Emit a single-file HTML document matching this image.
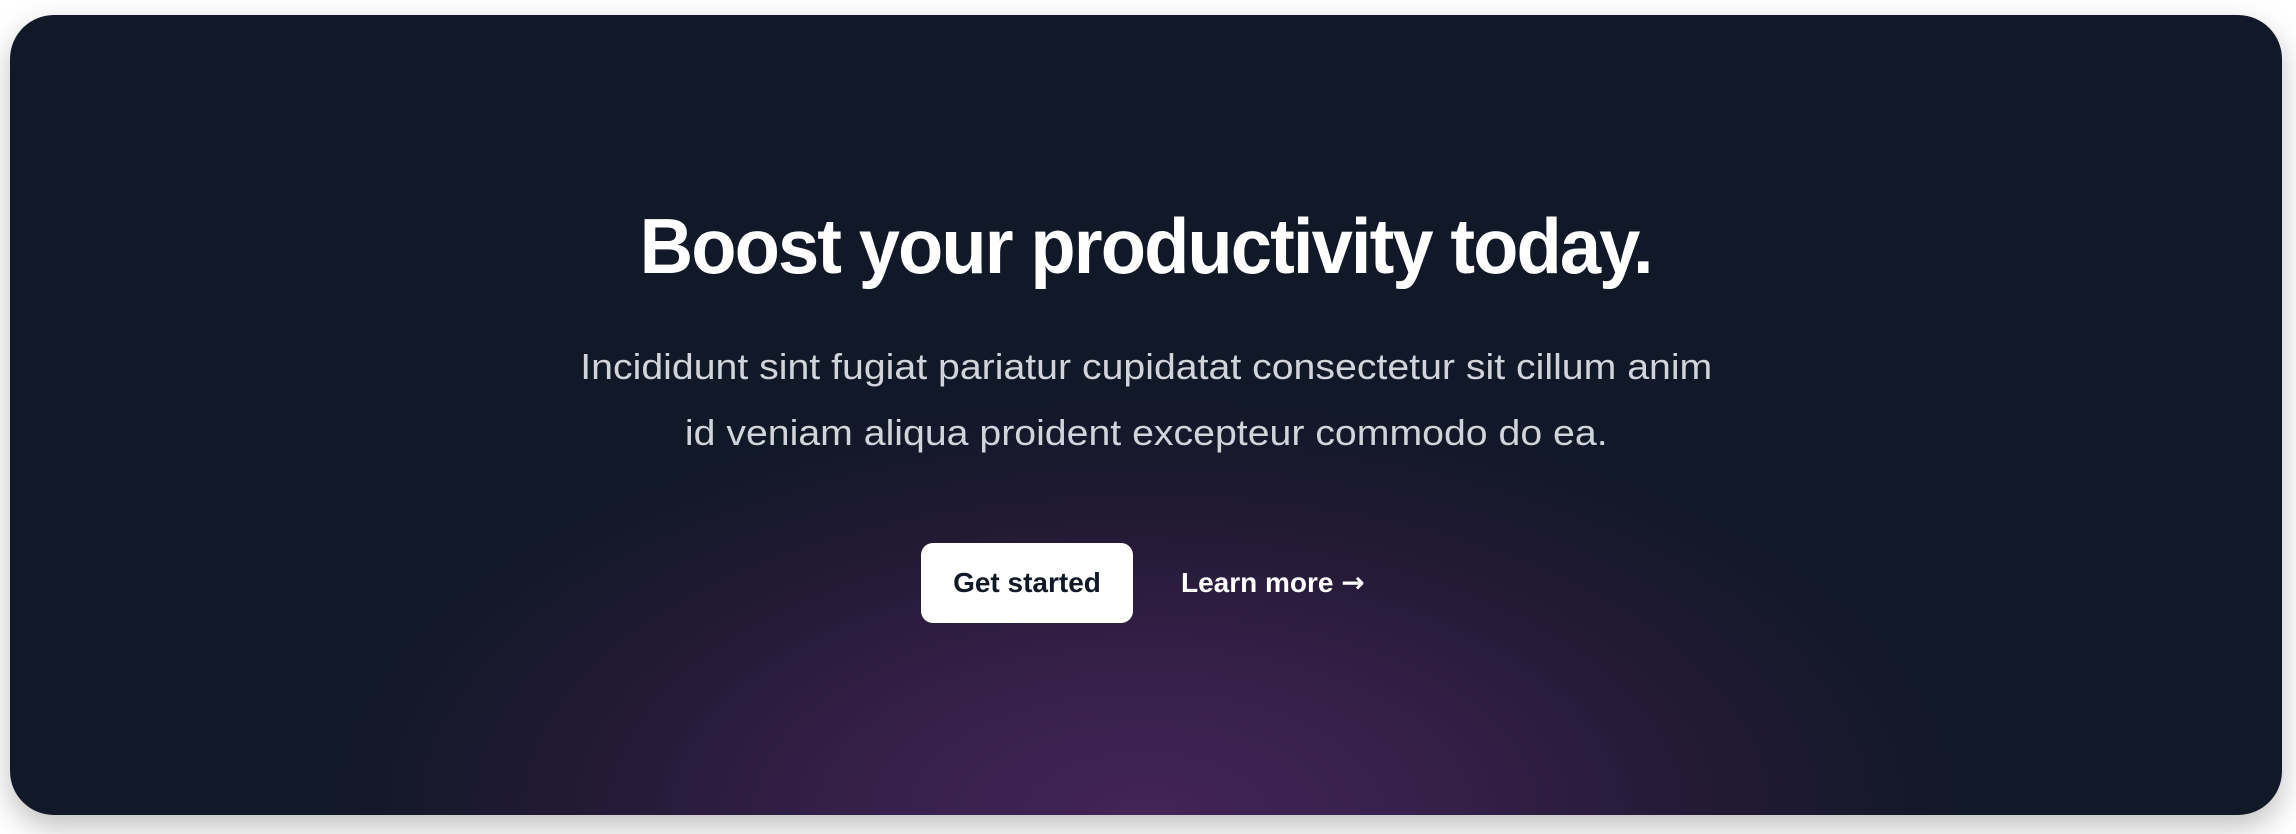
<!DOCTYPE html>
<html><head><meta charset="utf-8"><style>
html,body{margin:0;padding:0;width:2296px;height:834px;background:#fff;overflow:hidden;font-family:"Liberation Sans",sans-serif;}
.card{position:absolute;left:10px;top:15px;width:2272px;height:800px;border-radius:44px;overflow:hidden;
background:radial-gradient(ellipse 820px 420px at 1136px 800px,#432457 0%,#36204a 35%,#251a37 65%,#111827 100%);
box-shadow:0 12px 30px rgba(0,0,0,0.25);}
.h{position:absolute;left:0;width:2272px;top:181px;text-align:center;color:#fff;font-weight:700;font-size:78px;line-height:100px;}
.h span{display:inline-block;transform:scaleX(0.95);letter-spacing:-2px;}
.p{position:absolute;left:0;width:2272px;top:319px;text-align:center;color:#d1d5db;font-size:36px;line-height:66px;}
.p span{display:inline-block;transform:scaleX(1.09);}
.btn{position:absolute;left:911px;top:528px;width:212px;height:80px;background:#fff;border-radius:12px;color:#111827;font-weight:700;font-size:28px;line-height:80px;text-align:center;}
.lm{position:absolute;left:1171px;top:528px;line-height:80px;color:#fff;font-weight:700;font-size:28px;}
.lm b{font-family:"DejaVu Sans",sans-serif;font-size:28px;}
</style></head><body>
<div class="card">
<div class="h"><span>Boost your productivity today.</span></div>
<div class="p"><span>Incididunt sint fugiat pariatur cupidatat consectetur sit cillum anim<br>id veniam aliqua proident excepteur commodo do ea.</span></div>
<div class="btn">Get started</div>
<div class="lm">Learn more <b>→</b></div>
</div>
</body></html>
